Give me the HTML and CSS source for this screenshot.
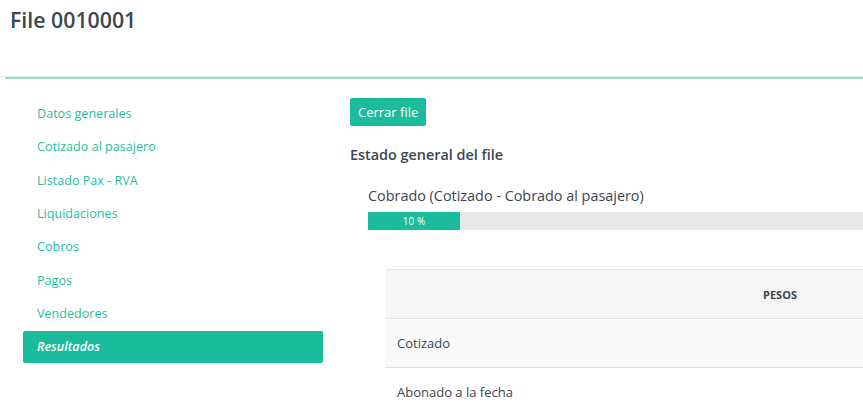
FILE: index.html
```html
<!DOCTYPE html>
<html lang="es">

<head>
  <meta charset="UTF-8">
  <meta name="viewport" content="width=device-width, initial-scale=1.0">
  <title>File 0010001</title>
  <link rel="stylesheet" href="styles.css">
</head>

<body>
  <!-- Encabezado -->
  <div class="page-header">
    <h1 class="page-title">File 0010001</h1>
  </div>
  <div class="header-accent"></div>

  <div class="layout">
    <!-- Menu lateral -->
    <ul class="side-nav">
      <li><a href="#">Datos generales</a></li>
      <li><a href="#">Cotizado al pasajero</a></li>
      <li><a href="#">Listado Pax - RVA</a></li>
      <li><a href="#">Liquidaciones</a></li>
      <li><a href="#">Cobros</a></li>
      <li><a href="#">Pagos</a></li>
      <li><a href="#">Vendedores</a></li>
      <li class="active"><a href="#">Resultados</a></li>
    </ul>

    <!-- Contenido -->
    <div class="content">
      <button class="btn-primary">Cerrar file</button>

      <h4 class="section-title">Estado general del file</h4>

      <div class="status-block">
        <div class="status-label">Cobrado (Cotizado - Cobrado al pasajero)</div>
        <div class="progress">
          <div class="progress-bar" style="width: 10%">10 %</div>
        </div>
      </div>

      <table class="results-table">
        <thead>
          <tr>
            <th class="col-label"></th>
            <th class="col-money">PESOS</th>
          </tr>
        </thead>
        <tbody>
          <tr>
            <td>Cotizado</td>
            <td></td>
          </tr>
          <tr>
            <td>Abonado a la fecha</td>
            <td></td>
          </tr>
        </tbody>
      </table>
    </div>
  </div>
</body>

</html>
```

FILE: styles.css
```css
/* General */
html,
body {
  overflow: hidden;
}

body {
  margin: 0;
  font-family: "Open Sans", "Liberation Sans", sans-serif;
  font-size: 13px;
  color: #3b4650;
  background-color: #fff;
}

/* Encabezado */
.page-header {
  height: 76px;
  padding: 0 10px;
  border-bottom: 1px solid #e6e6e6;
}

.page-title {
  margin: 0;
  padding-top: 5px;
  font-size: 21.3px;
  font-weight: 600;
  line-height: 30px;
  color: #3a4651;
}

.header-accent {
  margin-left: 5px;
  border-top: 2px solid #8fdecd;
}

/* Estructura */
.layout {
  display: flex;
  gap: 27px;
  padding: 18px 0 0 23px;
}

/* Menu lateral */
.side-nav {
  list-style: none;
  margin: 1px 0 0;
  padding: 0;
  width: 300px;
  flex-shrink: 0;
}

.side-nav li {
  margin-bottom: 1.33px;
}

.side-nav a {
  display: block;
  padding: 7px 14px;
  font-size: 12.6px;
  line-height: 18px;
  color: #1fbf9e;
  text-decoration: none;
  border-radius: 2px;
}

.side-nav li.active a {
  background-color: #1abc9c;
  color: #fff;
  font-style: italic;
  font-weight: 600;
}

/* Contenido */
.content {
  flex-shrink: 0;
  width: 960px;
  padding-top: 1px;
}

.btn-primary {
  padding: 5px 8px;
  border: none;
  border-radius: 2px;
  background-color: #1abc9c;
  color: #fff;
  font-family: inherit;
  font-size: 13px;
  line-height: 18px;
  cursor: pointer;
}

.section-title {
  margin: 19px 0 0;
  font-size: 14.4px;
  font-weight: 600;
  line-height: 20px;
  color: #3a4651;
}

.status-block {
  margin: 21px 0 0 18px;
}

.status-label {
  font-size: 14.4px;
  line-height: 20px;
  color: #3a4651;
}

.progress {
  margin-top: 6px;
  height: 18px;
  width: 920px;
  background-color: #e8e8e8;
}

.progress-bar {
  height: 100%;
  background-color: #1abc9c;
  color: #fff;
  font-size: 10px;
  line-height: 18px;
  text-align: center;
  border-radius: 1px;
}

/* Tabla de resultados */
.results-table {
  margin: 39px 0 0 36px;
  width: 488px;
  table-layout: fixed;
  border-collapse: collapse;
}

.results-table th,
.results-table td {
  height: 48px;
  padding: 0 11px;
  border-top: 1px solid #e1e4e6;
  text-align: left;
}

.results-table thead th {
  background-color: #f5f5f5;
  font-size: 11px;
  font-weight: 700;
  color: #3a4651;
  text-align: center;
}

.results-table tbody tr:nth-child(odd) td {
  background-color: #f8fafa;
}

.results-table .col-label {
  width: 278px;
}

.results-table .col-money {
  width: 166px;
}
```
